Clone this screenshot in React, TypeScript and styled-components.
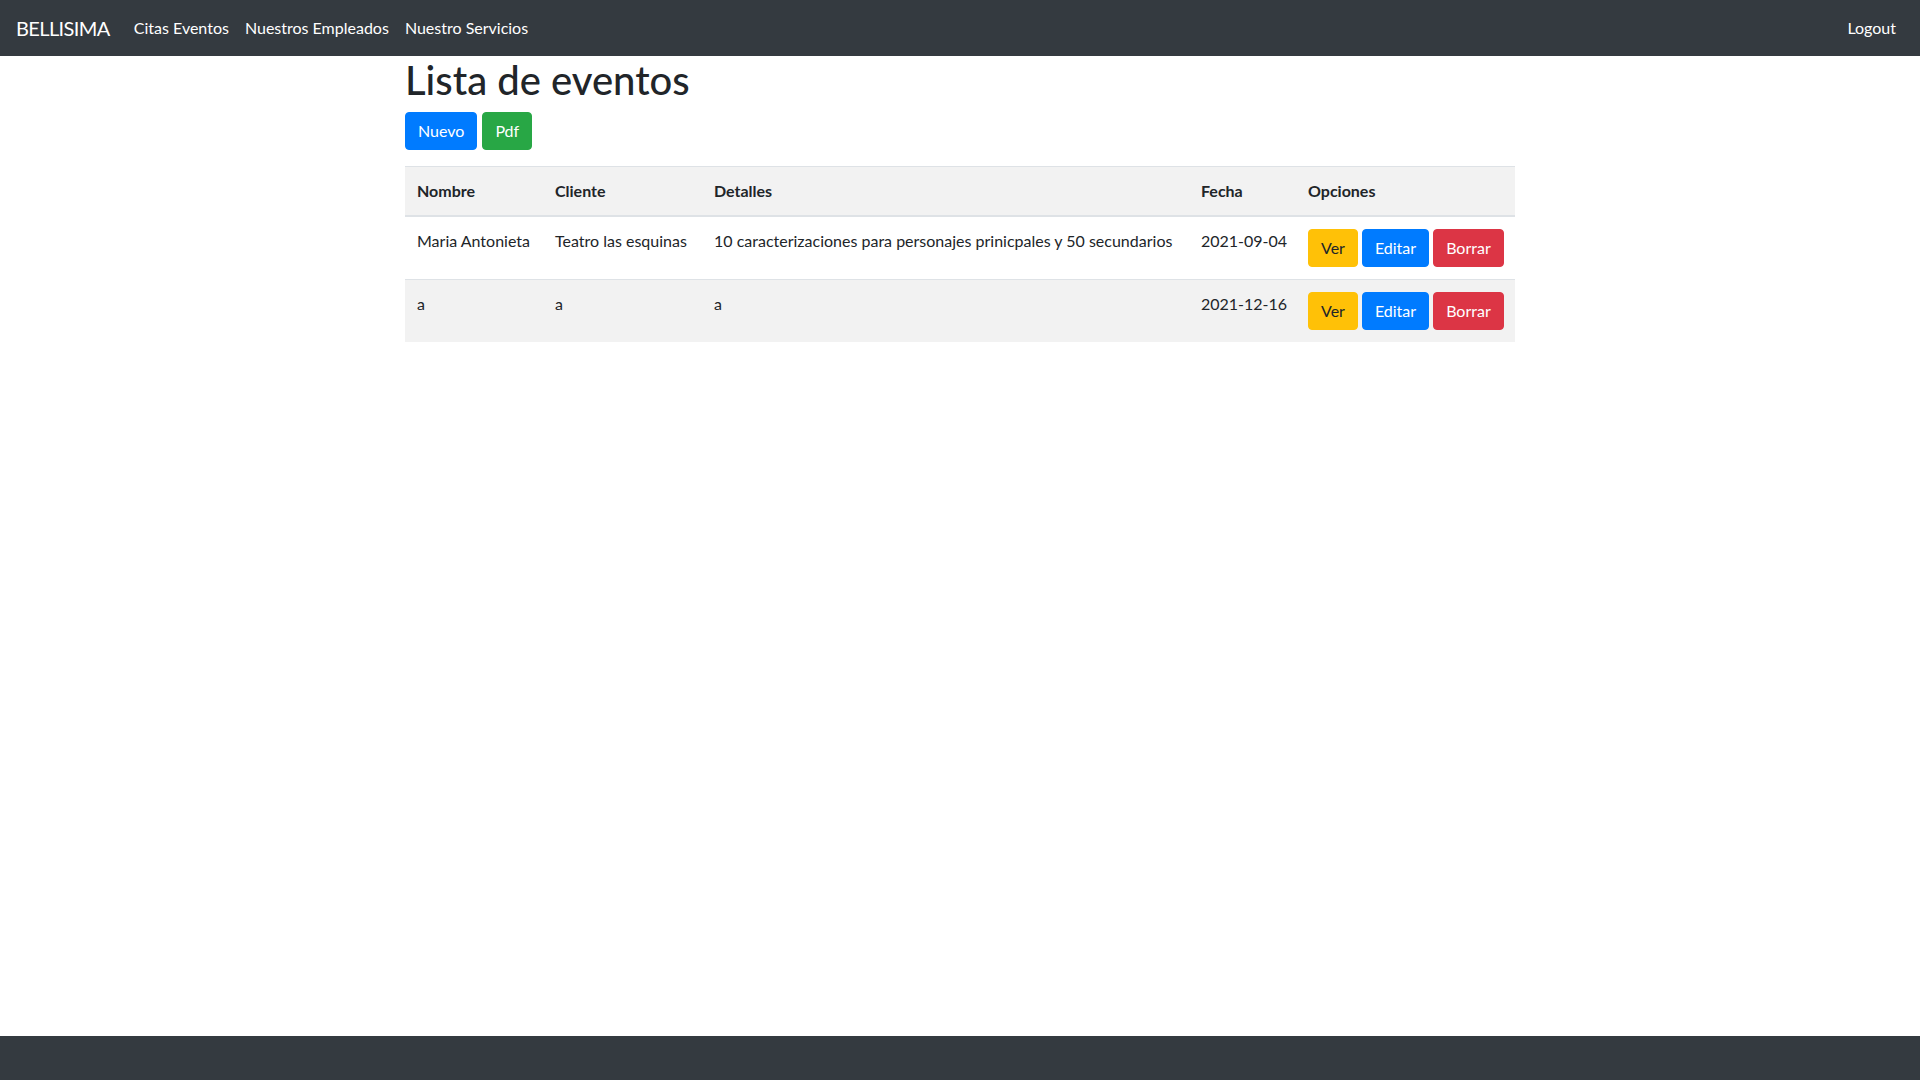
import styled, { createGlobalStyle } from "styled-components";

const GlobalStyle = createGlobalStyle`
  html, body {
    margin: 0;
    padding: 0;
  }
  body {
    font-family: Lato, "Liberation Sans", sans-serif;
    font-size: 16px;
    line-height: 1.5;
    color: #212529;
    background: #fff;
  }
  * {
    box-sizing: border-box;
  }
`;

interface Evento {
  id: number;
  nombre: string;
  cliente: string;
  detalles: string;
  fecha: string;
}

const eventos: Evento[] = [
  {
    id: 1,
    nombre: "Maria Antonieta",
    cliente: "Teatro las esquinas",
    detalles: "10 caracterizaciones para personajes prinicpales y 50 secundarios",
    fecha: "2021-09-04",
  },
  { id: 2, nombre: "a", cliente: "a", detalles: "a", fecha: "2021-12-16" },
];

const columns = [
  { label: "Nombre", width: 138 },
  { label: "Cliente", width: 159 },
  { label: "Detalles", width: 487 },
  { label: "Fecha", width: 107 },
  { label: "Opciones", width: 219 },
];

type Variant = "primary" | "success" | "warning" | "danger";

export default function App() {
  return (
    <Page>
      <GlobalStyle />
      <Navbar>
        <Brand href="#">BELLISIMA</Brand>
        <NavList>
          <NavLink href="#">Citas Eventos</NavLink>
          <NavLink href="#">Nuestros Empleados</NavLink>
          <NavLink href="#">Nuestro Servicios</NavLink>
        </NavList>
        <NavLink href="#">Logout</NavLink>
      </Navbar>

      <Container>
        <Title>Lista de eventos</Title>
        <Actions>
          <Button $variant="primary">Nuevo</Button>
          <Button $variant="success">Pdf</Button>
        </Actions>

        <Table>
          <colgroup>
            {columns.map((c) => (
              <Col key={c.label} $width={c.width} />
            ))}
          </colgroup>
          <thead>
            <tr>
              {columns.map((c) => (
                <Th key={c.label}>{c.label}</Th>
              ))}
            </tr>
          </thead>
          <tbody>
            {eventos.map((ev, i) => (
              <Row key={ev.id} $striped={i % 2 === 1}>
                <Td>{ev.nombre}</Td>
                <Td>{ev.cliente}</Td>
                <Td>{ev.detalles}</Td>
                <Td>{ev.fecha}</Td>
                <Td>
                  <Options>
                    <Button $variant="warning">Ver</Button>
                    <Button $variant="primary">Editar</Button>
                    <Button $variant="danger">Borrar</Button>
                  </Options>
                </Td>
              </Row>
            ))}
          </tbody>
        </Table>
      </Container>

      <Footer />
    </Page>
  );
}

const variants: Record<Variant, { bg: string; fg: string }> = {
  primary: { bg: "#007bff", fg: "#fff" },
  success: { bg: "#28a745", fg: "#fff" },
  warning: { bg: "#ffc107", fg: "#212529" },
  danger: { bg: "#dc3545", fg: "#fff" },
};

const Page = styled.div`
  display: flex;
  flex-direction: column;
  min-height: 100vh;
`;

const Navbar = styled.nav`
  display: flex;
  align-items: center;
  height: 56px;
  padding: 8px 16px;
  background: #343a40;
`;

const Brand = styled.a`
  margin-right: 16px;
  padding: 5px 0;
  font-size: 20px;
  line-height: 30px;
  letter-spacing: -0.6px;
  color: #fff;
  text-decoration: none;
`;

const NavList = styled.div`
  display: flex;
  flex: 1;
`;

const NavLink = styled.a`
  padding: 8px;
  color: #fff;
  text-decoration: none;
`;

const Container = styled.main`
  width: 1140px;
  margin: 0 auto;
  padding: 0 15px;
`;

const Title = styled.h1`
  margin: 0 0 8px;
  font-size: 40px;
  font-weight: 500;
  line-height: 1.2;
`;

const Actions = styled.div`
  display: flex;
  gap: 5px;
  margin-bottom: 16px;
`;

const Button = styled.button<{ $variant: Variant }>`
  padding: 6px 12px;
  border: 1px solid ${({ $variant }) => variants[$variant].bg};
  border-radius: 4px;
  background: ${({ $variant }) => variants[$variant].bg};
  color: ${({ $variant }) => variants[$variant].fg};
  font-family: inherit;
  font-size: 16px;
  line-height: 1.5;
  cursor: pointer;
`;

const Table = styled.table`
  width: 100%;
  table-layout: fixed;
  border-collapse: collapse;
  margin-bottom: 16px;
`;

const Col = styled.col<{ $width: number }>`
  width: ${({ $width }) => $width}px;
`;

const Th = styled.th`
  padding: 12px;
  text-align: left;
  font-weight: 700;
  background: #f2f2f2;
  border-top: 1px solid #dee2e6;
  border-bottom: 2px solid #dee2e6;
`;

const Row = styled.tr<{ $striped: boolean }>`
  background: ${({ $striped }) => ($striped ? "#f2f2f2" : "#fff")};
`;

const Td = styled.td`
  padding: 12px;
  vertical-align: top;
  white-space: nowrap;
  border-top: 1px solid #dee2e6;
`;

const Options = styled.div`
  display: flex;
  gap: 4px;
`;

const Footer = styled.footer`
  margin-top: auto;
  height: 44px;
  background: #343a40;
`;
